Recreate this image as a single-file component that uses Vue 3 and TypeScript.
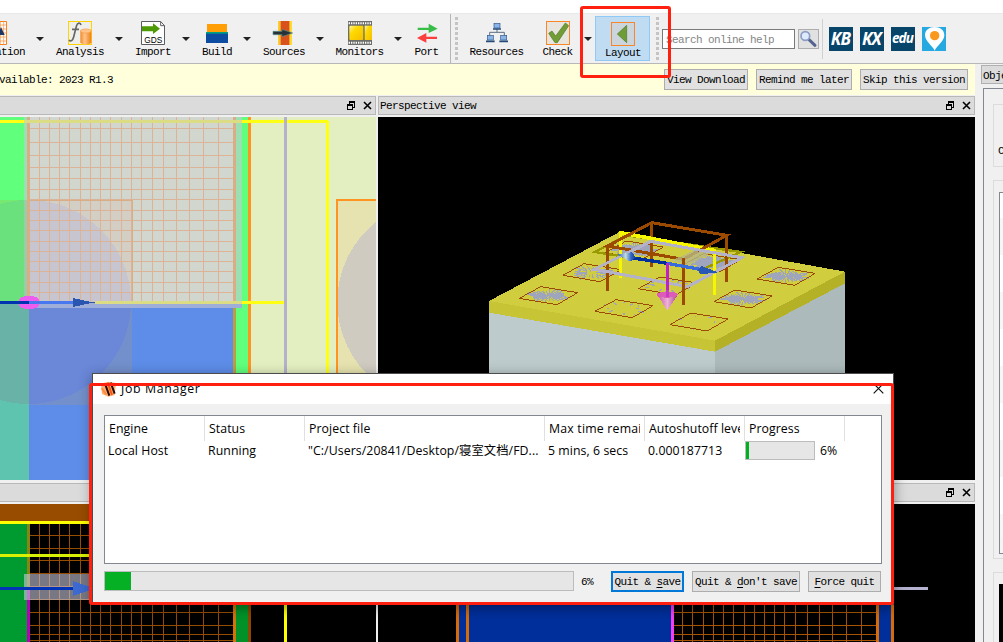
<script setup lang="ts">
interface Line { x1: number; y1: number; x2: number; y2: number }

const vertical: number[] = [39, 49, 59, 69, 80, 90, 100, 110, 121, 131, 141, 152, 163, 176, 189, 203, 218]
const horizontal: number[] = [128, 142, 155, 167, 178, 189, 199, 210, 220, 230, 241, 251, 261, 271, 282, 292]
const lowerRows: number[] = [535, 548, 560, 573, 586, 599, 612, 625, 634, 640]
const rightVertical: number[] = [682, 692, 703, 713, 723, 733, 744, 754, 764, 774, 784, 795, 807, 819, 832, 846, 861]

const patches = [
  { x: 118, y: 265, n: 25, inner: 0 },
  { x: 248, y: 196, n: 21, inner: 0.2 },
  { x: 375, y: 128, n: 50, inner: 0 },
  { x: 475, y: 236, n: 15, inner: 0.5 },
  { x: 344, y: 304, n: 12, inner: 0.55 },
  { x: 569, y: 344, n: 7, inner: 0.72 },
  { x: 701, y: 275, n: 27, inner: 0 },
  { x: 831, y: 207, n: 27, inner: 0 },
  { x: 607, y: 166, n: 70, inner: 0 },
]

function rays(n: number, inner: number): Line[] {
  const out: Line[] = []
  for (let i = 0; i < n; i++) {
    const a = (i / n) * Math.PI * 2
    const r0 = inner + ((i * 7) % 5) * 0.09
    const r1 = 0.68 + ((i * 11) % 6) * 0.07
    const c = Math.cos(a)
    const s = Math.sin(a)
    out.push({ x1: 88 + c * 68 * r0, y1: -8 + s * 22 * r0, x2: 88 + c * 68 * r1, y2: -8 + s * 22 * r1 })
  }
  return out
}

const scenePatches = patches.map((p) => ({ ...p, lines: rays(p.n, p.inner) }))

const columns = ['Engine', 'Status', 'Project file', 'Max time remai', 'Autoshutoff leve', 'Progress']
</script>

<template>
  <div class="window">
    <div class="top-strip"></div>
    <div class="toolbar">
      <div class="tool cut">
        <svg class="ico sim" width="24" height="24" viewBox="0 0 72 72"><path d="M0 1.500H70.500V70.500H0Z" fill="#fff" stroke="#ff7f1e" stroke-width="3" /><path d="M52 0V72M62 0V72M45 12H70M45 24H70M45 36H70M45 48H70M45 60H70" stroke="#ff8c32" stroke-width="2" /><path d="M44 42L54 18L65 42Z" fill="#1c3764" /></svg>
        <span>Simulation</span>
      </div>
      <i class="arrow"></i>
      <div class="tool">
        <svg class="ico" width="24" height="24" viewBox="0 0 72 72"><defs><linearGradient id="cyl"><stop offset="0" stop-color="#f58a28" /><stop offset=".4" stop-color="#ffc48a" /><stop offset="1" stop-color="#f07d1c" /></linearGradient></defs><rect x="1.5" y="1.5" width="69" height="69" fill="#eeeeea" stroke="#ffd400" stroke-width="3" /><path d="M39 12C37 4 28 4 25 16L17 48C14 59 8 63 3 57M12 25H33" fill="none" stroke="#666" stroke-width="5" /><path d="M37 30V66Q54 75 70 66V30Z" fill="url(#cyl)" /><ellipse cx="53.500" cy="30" rx="16.500" ry="6" fill="#ffc48a" stroke="#f59845" stroke-width="2" /></svg>
        <span>Analysis</span>
      </div>
      <i class="arrow"></i>
      <div class="tool">
        <svg class="ico" width="24" height="24" viewBox="0 0 72 72"><path d="M1.500 1.500H59L70.500 14V70.500H1.500Z" fill="#fff" stroke="#5c5c62" stroke-width="3" /><path d="M59 2V14H71" fill="none" stroke="#5c5c62" stroke-width="3" /><path d="M3 16H36V7L57 23L36 39V31H3Z" fill="#4e9a06" /><text x="37" y="65" text-anchor="middle" class="gds">GDS</text></svg>
        <span>Import</span>
      </div>
      <i class="arrow"></i>
      <div class="tool">
        <svg class="ico" width="24" height="24" viewBox="0 0 72 72"><rect x="6" y="9" width="60" height="27" fill="#ff9f05" /><path d="M3 36H69V66H3Z" fill="#0c4da2" /><path d="M3 33H69V38H3Z" fill="#00a080" /></svg>
        <span>Build</span>
      </div>
      <i class="arrow"></i>
      <div class="tool">
        <svg class="ico" width="24" height="24" viewBox="0 0 72 72"><defs><linearGradient id="beam"><stop offset="0" stop-color="#ffd52e" /><stop offset=".15" stop-color="#f6bd35" /><stop offset=".25" stop-color="#d9511c" /><stop offset=".75" stop-color="#d9511c" /><stop offset=".87" stop-color="#ffda35" /><stop offset="1" stop-color="#ffda35" /></linearGradient></defs><rect x="18" y="0" width="42" height="72" fill="url(#beam)" /><path d="M3 31H30V25L62 36L30 47V41H3Z" fill="#263238" stroke="#5e9390" stroke-width="2" /></svg>
        <span>Sources</span>
      </div>
      <i class="arrow"></i>
      <div class="tool">
        <svg class="ico" width="24" height="24" viewBox="0 0 72 72"><defs><linearGradient id="film" x2="1" y2="1"><stop offset="0" stop-color="#fff6a0" /><stop offset=".35" stop-color="#ffd900" /><stop offset="1" stop-color="#f5be00" /></linearGradient></defs><rect width="72" height="72" fill="#6d6e6a" /><path d="M2 7H72M2 65H72" stroke="#fff" stroke-width="6" stroke-dasharray="4 3" /><rect x="4" y="14" width="42" height="43" rx="3" fill="url(#film)" /><rect x="50" y="14" width="22" height="43" fill="url(#film)" /></svg>
        <span>Monitors</span>
      </div>
      <i class="arrow"></i>
      <div class="tool">
        <svg class="ico" width="24" height="24" viewBox="0 0 72 72"><path d="M8 20H41V8L68 23L41 36V27H8Z" fill="#39bd49" /><path d="M66 47H34V36L6 51L34 65V54H66Z" fill="#fb3f3f" /></svg>
        <span>Port</span>
      </div>
      <div class="rule"></div>
      <div class="grip"></div>
      <div class="tool">
        <svg class="ico" width="24" height="24" viewBox="0 0 72 72"><path d="M36 23V34M14 46V34H58V46" fill="none" stroke="#5d6e83" stroke-width="3" /><g fill="#88b4e8" stroke="#375887" stroke-width="2"><rect x="27" y="7" width="18" height="14" /><rect x="7" y="43" width="18" height="14" /><rect x="47" y="43" width="18" height="14" /></g><path d="M24 24H48M3 61H29M43 61H69" stroke="#244a7a" stroke-width="5" /></svg>
        <span>Resources</span>
      </div>
      <div class="tool check">
        <svg class="ico" width="24" height="24" viewBox="0 0 72 72"><rect x="1.500" y="1.500" width="69" height="69" fill="#e8e5df" stroke="#fb8628" stroke-width="3" /><path d="M8 37L18 30L29 45L58 6L68 14L34 65H27Z" fill="#729c35" stroke="#55792c" stroke-width="2" /></svg>
        <span>Check</span>
      </div>
      <i class="arrow late-arrow"></i>
      <div class="tool active">
        <svg class="ico" width="24" height="24" viewBox="0 0 72 72"><rect x="1.500" y="1.500" width="69" height="69" fill="#cbd5db" stroke="#fb8628" stroke-width="3" /><path d="M47 10V62L19 36Z" fill="#6d9c38" stroke="#50792a" stroke-width="2" /></svg>
        <span>Layout</span>
      </div>
      <div class="grip late"></div>
      <div class="search">Search online help</div>
      <div class="find"><svg width="19" height="18" viewBox="0 0 57 54"><path d="M30 29L48 46" stroke="#54638f" stroke-width="9" stroke-linecap="round" /><circle cx="19" cy="18" r="13" fill="#dfeaff" stroke="#8b9dc4" stroke-width="5" /></svg></div>
      <div class="thin"></div>
      <div class="logos">
        <div class="logo">KB</div>
        <div class="logo">KX</div>
        <div class="logo edu">edu</div>
        <div class="logo pin"><svg width="24" height="24" viewBox="0 0 72 72"><path d="M38 71C30 55 9 42 9 25C9 9 22 0 38 0S67 9 67 25C67 42 46 55 38 71Z" fill="#fff" /><circle cx="38" cy="26" r="14" fill="#f9981f" /></svg></div>
      </div>
    </div>

    <div class="work">
      <div class="main">
        <div class="banner">
          <span class="note">available: 2023 R1.3</span>
          <button class="btn b1">View Download</button>
          <button class="btn b2">Remind me later</button>
          <button class="btn b3">Skip this version</button>
        </div>
        <div class="views">
          <section class="dock">
            <header><svg class="winbtn" width="25" height="9" viewBox="0 0 25 9" shape-rendering="crispEdges"><path d="M2.500 3V1H7.500V6H6M.500 3.500H5.500V8H.500Z" fill="none" stroke="#000" /><path d="M2 0H8V2H2ZM0 3H6V5H0Z" /><path d="M17 1L24 8M24 1L17 8" stroke="#000" stroke-width="1.600" shape-rendering="auto" /></svg></header>
            <svg class="scene" width="376" height="363" viewBox="0 117 376 363" shape-rendering="crispEdges">
              <rect y="117" width="376" height="363" fill="#e3efc0" />
              <rect y="117" width="250" height="191" fill="#60ff7c" />
              <rect y="302" width="29" height="180" fill="#5ec4b0" />
              <rect x="29" y="302" width="204" height="180" fill="#5d8de8" />
              <rect x="233" y="302" width="3" height="180" fill="#b8a040" />
              <rect x="236" y="302" width="12" height="180" fill="#60ff7c" />
              <rect x="248" y="117" width="3" height="365" fill="#fb9721" />
              <rect x="24" y="117" width="218" height="187" fill="#9cdfb3" />
              <rect x="30" y="117" width="204" height="187" fill="#d1d6ce" />
              <rect x="29" y="200" width="103" height="102" fill="#d4cfc4" />
              <rect x="29" y="302" width="103" height="103" fill="#7390cc" />
              <path d="M0 200H24V302H0Z" fill="#77e970" />
              <path d="M0 204Q14 200 24 200V302H0Z" fill="#6be17d" />
              <path d="M24 200H29V302H24Z" fill="#9acca8" />
              <path d="M29 200A102 102 0 0 1 131 302H29Z" fill="#c7c5cf" />
              <path d="M131 302A102 102 0 0 1 29 404V302Z" fill="#6a87d8" />
              <path d="M0 302H29V404Q14 404 0 400Z" fill="#68b2a8" />
              <g fill="#dcb396"><rect v-for="x in vertical" :key="x" :x="x" y="117" width="1" height="185" /><rect v-for="y in horizontal" :key="y" x="30" :y="y" width="204" height="1" /></g>
              <path d="M27 117H30V302H27ZM233 117H236V302H233Z" fill="#d9ae86" />
              <path d="M30 200H132.500V302" fill="none" stroke="#d9ae86" />
              <rect x="24" y="302" width="218" height="6" fill="#9faed8" />
              <path d="M0 120H328V123H0ZM242 301H284V304H242ZM326 121H329V480H326Z" fill="#ffff14" />
              <path d="M24 120H242V123H24ZM95 301H242V304H95Z" fill="#dcdc84" />
              <rect x="284" y="117" width="3" height="365" fill="#b4b2cb" />
              <path d="M337 200H376V405H337Z" fill="#e7e3b0" /><path d="M376 222A102 102 0 0 0 376 382Z" fill="#cfcbc1" />
              <path d="M376 200H337V405H376" fill="none" stroke="#ff9520" stroke-width="2" />
              <ellipse cx="29" cy="302.500" rx="11" ry="7" fill="#ef5cf0" />
              <rect y="301" width="29" height="3" fill="#0033b0" /><rect x="29" y="301" width="44" height="3" fill="#4878f0" />
              <path d="M73 298L91 302H95V303H91L73 307Z" fill="#2a55b0" />
            </svg>
          </section>
          <section class="dock">
            <header><span>Perspective view</span><svg class="winbtn" width="25" height="9" viewBox="0 0 25 9" shape-rendering="crispEdges"><path d="M2.500 3V1H7.500V6H6M.500 3.500H5.500V8H.500Z" fill="none" stroke="#000" /><path d="M2 0H8V2H2ZM0 3H6V5H0Z" /><path d="M17 1L24 8M24 1L17 8" stroke="#000" stroke-width="1.600" shape-rendering="auto" /></svg></header>
            <svg class="scene" width="597" height="363" viewBox="378 117 597 363" shape-rendering="crispEdges">
              <defs>
                <clipPath id="slab"><path d="M422 64L27 273L705 392L1095 185Z" /></clipPath>
                <linearGradient id="lc"><stop offset="0" stop-color="#2058b8" /><stop offset=".45" stop-color="#c4dce0" /><stop offset=".75" stop-color="#2c62c0" /><stop offset="1" stop-color="#123c98" /></linearGradient>
                <linearGradient id="mc"><stop offset="0" stop-color="#c848b0" /><stop offset=".5" stop-color="#eeb4d4" /><stop offset="1" stop-color="#a83898" /></linearGradient>
              </defs>
              <rect x="378" y="117" width="597" height="363" />
              <g transform="translate(480 210) scale(.33333)">
                <path d="M27 300L705 420V600H27Z" fill="#bdcbcc" /><path d="M705 420L1095 215V600H705Z" fill="#acbabc" />
                <path d="M27 273L705 392V425L27 308Z" fill="#c7c435" /><path d="M705 392L1095 185V220L705 425Z" fill="#b5b126" />
                <path d="M422 64L27 273L705 392L1095 185Z" fill="#d0ce3e" />
                <g clip-path="url(#slab)">
                  <g v-for="p in scenePatches" :key="p.x" :transform="`translate(${p.x} ${p.y})`">
                    <g stroke="#9ea5bd" stroke-width="3.500"><line v-for="(l, i) in p.lines" :key="i" v-bind="l" /></g>
                    <path d="M0 0L64 -35L175 -17L113 19Z" fill="none" stroke="#9b4a00" stroke-width="3" />
                  </g>
                </g>
                <path d="M345 126L440 76L782 126L668 178Z" fill="none" stroke="#999900" stroke-width="7" />
                <path d="M515 38V172" stroke="#9b4a00" stroke-width="8" />
                <path d="M422 68L703 121" stroke="#f6f600" stroke-width="11" /><path d="M422 64V203M703 118V255" stroke="#f6f600" stroke-width="8" />
                <path d="M515 38L740 76L610 148L383 108ZM740 76V215M383 104V242" fill="none" stroke="#9b4a00" stroke-width="9" />
                <path d="M575 152L640 122L690 131L625 167Z" fill="#b8b884" opacity=".8" />
                <path d="M343 178L512 94L785 143L623 230Z" fill="none" stroke="#b4b2cb" stroke-width="9" />
                <path d="M610 144V285" stroke="#9b4a00" stroke-width="8" />
                <path d="M440 141L562 160" stroke="#00309c" stroke-width="10" /><path d="M562 160L665 179" stroke="#386bdc" stroke-width="10" />
                <path d="M412 133L455 127L468 142L450 155Z" fill="url(#lc)" />
                <path d="M715 187L664 168L653 180L662 193Z" fill="#2858b4" />
                <path d="M562 160V262" stroke="#c020c8" stroke-width="9" />
                <path d="M531 253L562 302L594 253Z" fill="url(#mc)" /><ellipse cx="562" cy="254" rx="32" ry="9" fill="#dc5cb8" /><path d="M562 240V262" stroke="#c83cc8" stroke-width="8" />
              </g>
            </svg>
          </section>
          <section class="dock">
            <header></header>
            <svg class="scene" width="376" height="138" viewBox="0 504 376 138" shape-rendering="crispEdges">
              <rect y="504" width="376" height="138" />
              <g fill="#984c00"><rect v-for="x in vertical" :key="x" :x="x" y="524" width="1" height="118" /><rect v-for="y in lowerRows" :key="y" x="30" :y="y" width="204" height="1" /></g>
              <rect y="504" width="251" height="17" fill="#984c00" />
              <rect y="524" width="27" height="118" fill="#009b30" /><rect x="27" y="524" width="3" height="66" fill="#8c8410" /><rect x="27" y="589" width="3" height="53" fill="#b800b8" />
              <path d="M0 521H287V524H0ZM284 524H287V642H284Z" fill="#ffff00" /><rect y="554" width="284" height="3" fill="#d9f005" />
              <rect x="233" y="524" width="3" height="118" fill="#d0750a" /><rect x="236" y="524" width="12" height="118" fill="#009228" /><rect x="248" y="524" width="3" height="118" fill="#8c4800" />
              <rect x="24" y="574" width="218" height="26" fill="#c8c8dc" fill-opacity=".6" />
              <rect y="587" width="73" height="3" fill="#0033b8" /><path d="M73 581L90 587V590L73 596Z" fill="#3d6ad0" />
            </svg>
          </section>
          <section class="dock">
            <header><svg class="winbtn" width="25" height="9" viewBox="0 0 25 9" shape-rendering="crispEdges"><path d="M2.500 3V1H7.500V6H6M.500 3.500H5.500V8H.500Z" fill="none" stroke="#000" /><path d="M2 0H8V2H2ZM0 3H6V5H0Z" /><path d="M17 1L24 8M24 1L17 8" stroke="#000" stroke-width="1.600" shape-rendering="auto" /></svg></header>
            <svg class="scene" width="597" height="138" viewBox="378 504 597 138" shape-rendering="crispEdges">
              <rect x="378" y="504" width="597" height="138" />
              <rect x="459" y="600" width="432" height="42" fill="#002f9c" /><rect x="674" y="600" width="202" height="42" />
              <g fill="#a85400"><rect v-for="x in rightVertical" :key="x" :x="x" y="600" width="1" height="42" /><rect v-for="y in [612, 625, 634, 640]" :key="y" x="674" :y="y" width="204" height="1" /></g>
              <path d="M456 600H459V642H456ZM466 600H469V642H466ZM876 600H879V642H876ZM891 600H894V642H891Z" fill="#d66c08" />
              <rect x="671" y="600" width="3" height="42" fill="#f43cf4" />
              <rect x="880" y="587" width="48" height="3" fill="#b4b2cf" />
            </svg>
          </section>
        </div>
      </div>
      <aside class="side">
        <div class="tab">Objects</div>
        <div class="frame">
          <div class="group first">C</div>
          <div class="group second"><div class="tree"></div></div>
          <div class="group third"><div class="dark"></div></div>
        </div>
      </aside>
    </div>

    <div class="dialog">
      <div class="titlebar">
        <svg width="16" height="16" viewBox="0 0 48 48"><path d="M0 8L22 2L45 6L41 42L22 47L3 39Z" fill="#ffae73" /><path d="M12 8L25 44M29 5L41 38" stroke="#2c0903" stroke-width="6" /><path d="M20 5L33 42" stroke="#f6560b" stroke-width="6" /><path d="M2 22L16 40" stroke="#fb8b3d" stroke-width="6" /></svg>
        <span>Job Manager</span>
        <svg class="close" width="11" height="11" viewBox="0 0 11 11"><path d="M.700 .700L10.300 10.300M10.300 .700L.700 10.300" stroke="#111" stroke-width="1.200" /></svg>
      </div>
      <div class="table">
        <div class="row head"><div v-for="c in columns" :key="c" class="cell"><div class="clip">{{ c }}</div></div></div>
        <div class="row data">
          <div class="cell">Local Host</div><div class="cell">Running</div>
          <div class="cell file">"C:/Users/20841/Desktop/寝室文档/FD...</div>
          <div class="cell">5 mins, 6 secs</div><div class="cell num">0.000187713</div>
          <div class="mini"><div class="fill"></div></div><div class="pct">6%</div>
        </div>
      </div>
      <div class="foot">
        <div class="total"><div class="fill"></div></div>
        <span class="pct2">6%</span>
        <button class="btn q1">Quit &amp; <u>s</u>ave</button>
        <button class="btn q2">Quit &amp; <u>d</u>on<span class="tick">'</span>t save</button>
        <button class="btn q3"><u>F</u>orce quit</button>
      </div>
    </div>
    <div class="mark mark-layout"></div>
    <div class="mark mark-jobs"></div>
  </div>
</template>

<style>
html, body { margin: 0; overflow: hidden; }
</style>

<style scoped>
.window { position: relative; width: 1003px; height: 642px; overflow: hidden; background: #f0f0f0; color: #000; font: 11px/14px "Liberation Mono", monospace; letter-spacing: -.6px; display: flex; flex-direction: column; }
.window * { box-sizing: border-box; }
.top-strip { height: 14px; background: #fff; border-bottom: 1px solid #e9e9e9; flex: none; }
.toolbar { height: 50px; flex: none; display: grid; grid-template-columns: 31px 19px 60px 19px 48px 19px 42px 19px 54px 19px 59px 20px 35px 8px 8px 73px 48px 14px 55px 12px 133px 3px 21px 10px 117px; border-bottom: 1px solid #b8b8b8; }
.tool { display: flex; flex-direction: column; align-items: center; padding-top: 7px; white-space: nowrap; }
.tool span { display: block; line-height: 15px; }
.ico { display: block; flex: none; }
.cut { align-items: flex-end; padding-right: 6px; overflow: hidden; }
.sim { margin-right: 18px; }
.check { padding-left: 1px; }
.gds { font: 25px "Liberation Sans", sans-serif; letter-spacing: 0; }
.arrow { width: 0; height: 0; border: 4px solid transparent; border-top-color: #222; border-bottom: 0; margin: 23px 0 0 5px; }
.late-arrow { margin-left: 3px; }
.rule { width: 1px; background: #b5b5b5; margin-left: 6px; }
.grip { margin: 3px 0 0 3px; width: 3px; height: 44px; background: repeating-linear-gradient(#c4c4c4 0 3px, transparent 3px 5px); }
.grip.late { margin-left: 6px; }
.active { height: 45px; margin-top: 2px; padding: 5px 0 0 1px; background: #c0dcf3; border: 1px solid #90c8f6; }
.search { height: 20px; margin-top: 15px; border: 1px solid #7a7a7a; background: #fff; color: #858585; padding: 2px 0 0 3px; line-height: 17px; white-space: nowrap; }
.find { grid-column: 23; height: 20px; margin-top: 15px; background: #e1e1e1; border: 1px solid #adadad; }
.find svg { display: block; }
.thin { width: 1px; height: 40px; background: #d0d0d0; margin: 5px 0 0 3px; }
.logos { display: flex; gap: 7px; padding-top: 13px; }
.logo { flex: none; width: 24px; height: 24px; background: #08456b; color: #fff; font: italic bold 17px/23px "Open Sans", sans-serif; letter-spacing: -.8px; text-align: center; padding-right: 1px; overflow: hidden; }
.edu { font-size: 13.500px; line-height: 22px; letter-spacing: -.9px; }
.logo.pin { background: #25a9e0; padding: 0; }
.pin svg { display: block; }
.work { display: flex; height: 578px; }
.main { width: 975px; flex: none; }
.banner { height: 31px; background: #ffffdc; display: flex; align-items: flex-start; padding-top: 5px; }
.note { width: 671px; margin-left: -7px; line-height: 23px; white-space: nowrap; }
.btn { height: 21px; padding: 1px 0 0; border: 1px solid #adadad; background: #e1e1e1; font: inherit; letter-spacing: inherit; color: #000; white-space: nowrap; flex: none; }
.b1 { width: 84px; } .b2 { width: 96px; margin-left: 8px; } .b3 { width: 108px; margin-left: 8px; }
.views { display: grid; grid-template-columns: 376px 597px; grid-template-rows: 384px 160px; column-gap: 2px; padding-top: 1px; row-gap: 3px; }
.dock { display: flex; flex-direction: column; }
.dock header { height: 19px; margin-bottom: 2px; flex: none; border: 1px solid #b8b8b8; background: #dbdbdb; display: flex; align-items: center; padding: 0 3px 0 1px; }
.dock header span { padding-top: 1px; }
.dock:nth-child(odd) header { border-left: 0; }
.winbtn { margin-left: auto; }
.scene { display: block; flex: none; }
.side { flex: 1; padding: 1px 0 0 6px; overflow: hidden; }
.tab { height: 19px; border: 1px solid #b0b0b0; background: #dbdbdb; padding: 3px 0 0 1px; width: 50px; }
.frame { margin: 4px 0 0 2px; height: 560px; width: 50px; border: 1px solid #828790; padding: 15px 0 0 9px; }
.group { width: 60px; border: 1px solid #dcdcdc; }
.first { height: 63px; padding: 39px 0 0 4px; }
.second { height: 379px; margin-top: 13px; padding: 11px 0 0 5px; }
.third { height: 90px; margin-top: 13px; padding: 11px 0 0 5px; }
.tree { height: 362px; border: 1px solid #828790; background: linear-gradient(#f4f4f4, #f4f4f4) 0 345px / 100% 20px no-repeat, repeating-linear-gradient(#fff 0 25px, #f6f6f6 25px 62px, #fff 62px 74px); }
.dark { height: 78px; background: #000; }
.dialog { position: absolute; left: 92px; top: 373px; width: 802px; height: 232px; border: 1px solid #4c4c4c; background: #f0f0f0; box-shadow: 0 3px 12px rgba(0, 0, 0, .4); font-family: "Open Sans", "Noto Sans CJK SC", sans-serif; font-size: 12.300px; letter-spacing: .07px; }
.titlebar { height: 30px; background: #fff; display: flex; align-items: center; padding: 0 9px 1px 8px; }
.titlebar span { margin-left: 4px; letter-spacing: .65px; }
.close { margin-left: auto; }
.table { width: 778px; height: 149px; margin: 11px 0 0 11px; border: 1px solid #828790; background: #fff; }
.row { display: flex; }
.cell { width: 100px; flex: none; white-space: nowrap; overflow: hidden; }
.cell:nth-child(3) { width: 240px; }
.head .cell { height: 25px; border-right: 1px solid #e0e0e0; padding: 0 4px; line-height: 25px; }
.clip { overflow: hidden; }
.head .cell:nth-child(4) { letter-spacing: .2px; } .head .cell:nth-child(5) { letter-spacing: .05px; }
.data .cell { padding-left: 3px; line-height: 20px; }
.data .file { letter-spacing: .08px; }
.mini { width: 70px; height: 19px; border: 1px solid #bcbcbc; background: #e6e6e6; flex: none; }
.fill { height: 100%; width: 3px; background: #06b025; }
.pct { margin-left: 5px; line-height: 20px; }
.foot { display: flex; margin: 7px 0 0 11px; font-family: "Liberation Mono", monospace; font-size: 11px; letter-spacing: -.6px; }
.total { width: 470px; height: 20px; border: 1px solid #bcbcbc; background: #e6e6e6; }
.total .fill { width: 26px; }
.pct2 { width: 37px; padding-left: 7px; line-height: 22px; }
.q1 { width: 73px; border: 2px solid #0078d7; }
.q2 { width: 108px; margin-left: 8px; }
.q3 { width: 73px; margin-left: 8px; }
.tick { display: inline-block; width: 6px; text-align: left; }
u { text-underline-offset: 2px; }
.mark { position: absolute; border: 3px solid #ff2010; border-radius: 3px; pointer-events: none; }
.mark-layout { left: 580px; top: 6px; width: 91px; height: 72px; }
.mark-jobs { left: 89px; top: 383px; width: 805px; height: 222px; }
</style>
